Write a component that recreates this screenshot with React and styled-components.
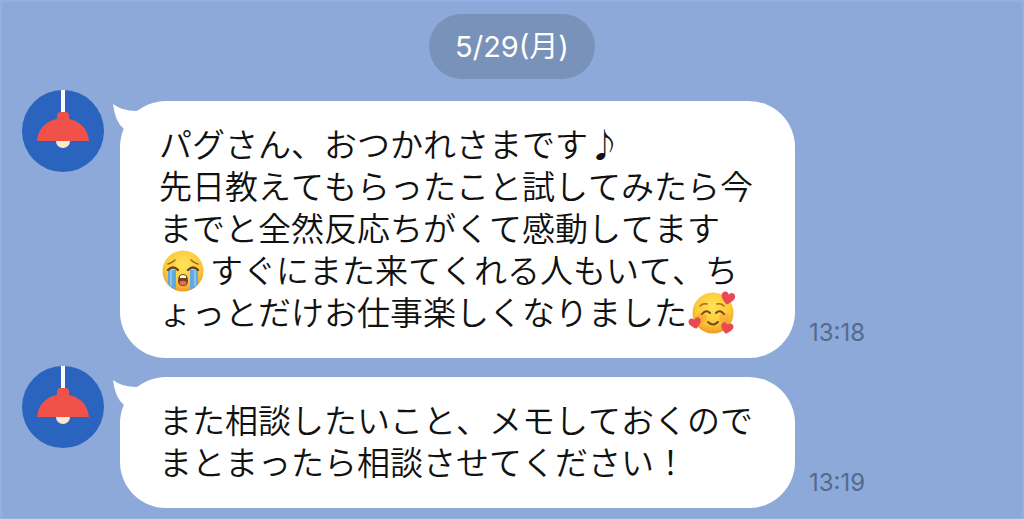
import React from 'react'
import styled, { createGlobalStyle } from 'styled-components'

const GlobalStyle = createGlobalStyle`
  * {
    box-sizing: border-box;
  }
  body {
    margin: 0;
    background: #8ca9d9;
  }
`;

const Chat = styled.main`
  min-height: 100vh;
  padding: 12px 20px 9px;
  border: 2px solid #92b0e2;
  border-bottom-width: 1px;
  background: #8ca9d9;
  font-family: Inter, "Noto Sans CJK JP", sans-serif;
`;

const DateBadge = styled.time`
  display: block;
  width: fit-content;
  margin: 0 auto 11px;
  padding: 0 26px;
  border-radius: 33px;
  background: #7892b9;
  color: #fff;
  font-size: 29px;
  line-height: 65px;
`;

const Messages = styled.ul`
  display: flex;
  flex-direction: column;
  gap: 8px;
  margin: 0;
  padding: 0;
  list-style: none;
`;

const Message = styled.li`
  display: flex;
  align-items: flex-start;
`;

const Avatar = styled.svg`
  flex: none;
  width: 82px;
  height: 82px;
  margin-right: 16px;
`;

const Bubble = styled.div`
  position: relative;
  margin-top: 11px;
  padding: 21px 42px 26px 39px;
  border-radius: 46px;
  background: #fff;
`;

const Tail = styled.svg`
  position: absolute;
  top: 2px;
  left: -8px;
  width: 32px;
  height: 32px;
`;

const Text = styled.p`
  margin: 0;
  color: #111;
  font-family: "Noto Sans CJK JP", sans-serif;
  font-size: 33px;
  font-weight: 350;
  font-kerning: none;
  line-height: 42px;
`;

const Emoji = styled.svg`
  width: 46px;
  height: 42px;
  margin-left: 2px;
  margin-right: ${props => props.$space || "0"};
  overflow: visible;
  vertical-align: top;
`;

const Time = styled.time`
  align-self: flex-end;
  margin-left: 14px;
  padding-bottom: 11px;
  color: #56698c;
  font-size: 24px;
  line-height: 28px;
`;

const Lamp = () => (
  <Avatar viewBox="0 0 82 82" role="img" aria-label="lamp">
    <circle cx="41" cy="41" r="41" fill="#2a64bf" />
    <path d="M41 0V24" stroke="#fff" strokeWidth="4" />
    <circle cx="41" cy="51" r="7" fill="#fbe9cb" />
    <path d="M35 29V26Q35 22 39 22H43Q47 22 47 26V29C58 31 66 39 67 51H15C16 39 24 31 35 29Z" fill="#f0524a" />
  </Avatar>
)

const Crying = () => (
  <Emoji $space="3px" viewBox="0 -2 46 42" role="img" aria-label="crying face">
    <defs>
      <radialGradient id="cryFace" cx="50%" cy="35%" r="65%">
        <stop offset="0" stopColor="#ffe35a" />
        <stop offset="0.65" stopColor="#fccb3c" />
        <stop offset="1" stopColor="#ee9d25" />
      </radialGradient>
    </defs>
    <circle cx="22" cy="21" r="20.5" fill="url(#cryFace)" />
    <path d="M7 20H15V40Q10 38 7 34ZM29 20H37V34Q34 38 29 40Z" fill="#62a9e4" />
    <path d="M10 20V36M34 20V36" stroke="#8ac6f2" strokeWidth="2" />
    <path d="M7 14Q11 13 14 10M30 10Q33 13 37 14" fill="none" stroke="#9b6422" strokeWidth="1.6" strokeLinecap="round" />
    <path d="M7 20Q12 15 17 20M27 20Q32 15 37 20" fill="none" stroke="#68431d" strokeWidth="2.4" strokeLinecap="round" />
    <path d="M17 31Q17 24 22 24T27 31Q27 36 22 36T17 31Z" fill="#72401e" />
    <path d="M19 26Q22 24 25 26V28H19Z" fill="#fff" />
    <ellipse cx="22" cy="33" rx="3.5" ry="2.2" fill="#e66a55" />
  </Emoji>
)

const Heart = ({ transform }) => (
  <path
    transform={transform}
    d="M0 6C-4 3-7 0-6-3C-5-6-1-6 0-3C1-6 5-6 6-3C7 0 4 3 0 6Z"
    fill="#e84a55"
  />
)

const Loving = () => (
  <Emoji viewBox="0 -2 46 42" role="img" aria-label="smiling face with hearts">
    <defs>
      <radialGradient id="loveFace" cx="50%" cy="35%" r="65%">
        <stop offset="0" stopColor="#ffe35a" />
        <stop offset="0.65" stopColor="#fcc936" />
        <stop offset="1" stopColor="#ee9a25" />
      </radialGradient>
    </defs>
    <circle cx="24" cy="21" r="20.5" fill="url(#loveFace)" />
    <circle cx="13" cy="26" r="5" fill="#f59a38" opacity="0.5" />
    <circle cx="35" cy="26" r="5" fill="#f59a38" opacity="0.5" />
    <path d="M11 14Q14 11 18 12M28 12Q32 11 35 14" fill="none" stroke="#a96b20" strokeWidth="1.6" strokeLinecap="round" />
    <path d="M13 22Q17 17 21 21M27 21Q31 17 35 22M19 30Q24 35 29 30" fill="none" stroke="#7a461c" strokeWidth="2" strokeLinecap="round" />
    <Heart transform="translate(39 6) rotate(12) scale(1.1)" />
    <Heart transform="translate(6 31) rotate(-12)" />
    <Heart transform="translate(38 36) rotate(12)" />
  </Emoji>
)

const MessageRow = ({ time, children }) => (
  <Message>
    <Lamp />
    <Bubble>
      <Tail viewBox="0 0 32 32" aria-hidden="true">
        <path d="M1 1Q10 8 24 8L32 6V32L16 32L12 26Q3 19 1 1Z" fill="#fff" />
      </Tail>
      <Text>{children}</Text>
    </Bubble>
    <Time>{time}</Time>
  </Message>
)

export default function App() {
  return (
    <>
      <GlobalStyle />
      <Chat lang="ja">
        <DateBadge>5/29(月)</DateBadge>
        <Messages>
          <MessageRow time="13:18">
            パグさん、おつかれさまです♪<br />
            先日教えてもらったこと試してみたら今<br />
            までと全然反応ちがくて感動してます<br />
            <Crying />すぐにまた来てくれる人もいて、ち<br />
            ょっとだけお仕事楽しくなりました<Loving />
          </MessageRow>
          <MessageRow time="13:19">
            また相談したいこと、メモしておくので<br />
            まとまったら相談させてください！
          </MessageRow>
        </Messages>
      </Chat>
    </>
  )
}
